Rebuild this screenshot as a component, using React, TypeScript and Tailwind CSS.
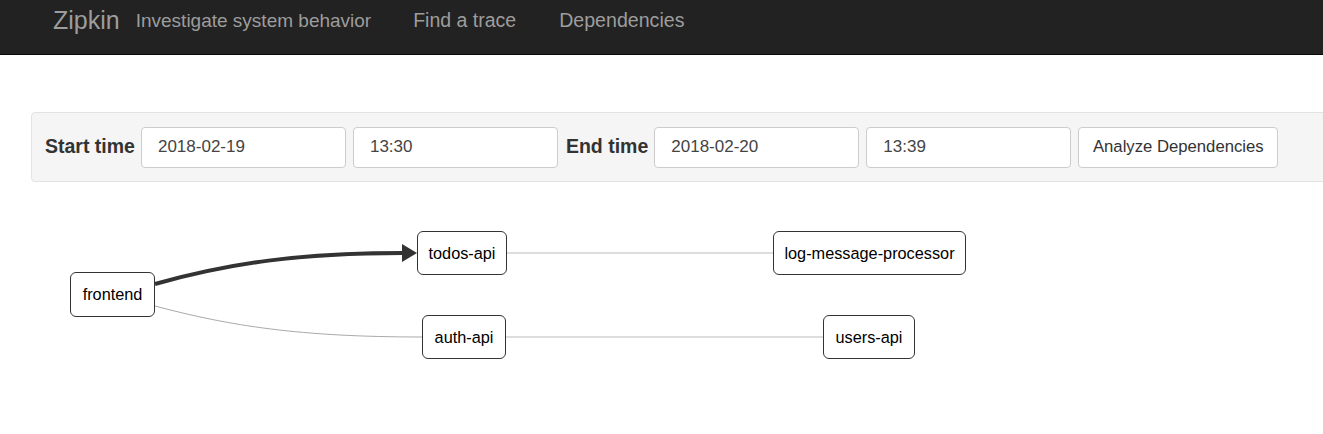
const font = { fontFamily: '"Liberation Sans", Arial, sans-serif' };

type Node = { name: string; left: number; top: number; width: number; height: number };

const nodes: Node[] = [
  { name: "frontend", left: 70, top: 90, width: 85, height: 45 },
  { name: "todos-api", left: 417, top: 49, width: 90, height: 44 },
  { name: "log-message-processor", left: 773, top: 49, width: 193, height: 44 },
  { name: "auth-api", left: 422, top: 133, width: 84, height: 44 },
  { name: "users-api", left: 823, top: 133, width: 92, height: 44 },
];

const Navbar = () => (
  <div className="h-[55px] border-b border-[#080808] bg-[#222222]">
    <div className="flex h-[41px] items-center pl-[53px] text-[#9d9d9d]">
      <span className="text-[25px] leading-none">Zipkin</span>
      <span className="ml-[16px] text-[19px] leading-none">Investigate system behavior</span>
      <span className="ml-[42px] text-[19.5px] leading-none">Find a trace</span>
      <span className="ml-[43px] text-[19.6px] leading-none">Dependencies</span>
    </div>
  </div>
);

const TextInput = ({ value }: { value: string }) => (
  <div className="flex h-[41px] w-[205px] items-center rounded-[4px] border border-[#cccccc] bg-white pl-[16px] text-[17px] text-[#444444]">
    {value}
  </div>
);

const Toolbar = () => (
  <div className="ml-[31px] flex h-[70px] w-[1320px] items-center rounded-l-[4px] border border-[#e3e3e3] bg-[#f5f5f5] pl-[13px] text-[#333333]">
    <span className="text-[19.5px] font-bold">Start time</span>
    <div className="ml-[6px] flex gap-[7px]">
      <TextInput value="2018-02-19" />
      <TextInput value="13:30" />
    </div>
    <span className="ml-[8px] text-[19.5px] font-bold">End time</span>
    <div className="ml-[6px] flex gap-[7px]">
      <TextInput value="2018-02-20" />
      <TextInput value="13:39" />
      <button className="h-[41px] w-[200px] rounded-[4px] border border-[#cccccc] bg-white text-[16.7px] text-[#333333]">
        Analyze Dependencies
      </button>
    </div>
  </div>
);

const Graph = () => (
  <div className="relative h-[253px] w-full">
    <svg className="absolute left-0 top-0" width="1323" height="253">
      <path d="M155,102 C230,81 300,71 403,71" fill="none" stroke="#333333" strokeWidth="4" />
      <polygon points="402,62 417,71 402,80" fill="#333333" />
      <path d="M155,124 C230,144 300,155 422,155" fill="none" stroke="#aaaaaa" strokeWidth="1" />
      <path d="M507,71 L773,71" fill="none" stroke="#bbbbbb" strokeWidth="1" />
      <path d="M506,155 L823,155" fill="none" stroke="#bbbbbb" strokeWidth="1" />
    </svg>
    {nodes.map((n) => (
      <div
        key={n.name}
        className="absolute flex items-center justify-center rounded-[6px] border border-[#333333] bg-white text-[16.3px] text-black"
        style={{ left: n.left, top: n.top, width: n.width, height: n.height }}
      >
        {n.name}
      </div>
    ))}
  </div>
);

export default function App() {
  return (
    <div className="h-[434px] w-full overflow-hidden bg-white" style={font}>
      <Navbar />
      <div className="pt-[57px]">
        <Toolbar />
      </div>
      <Graph />
    </div>
  );
}
